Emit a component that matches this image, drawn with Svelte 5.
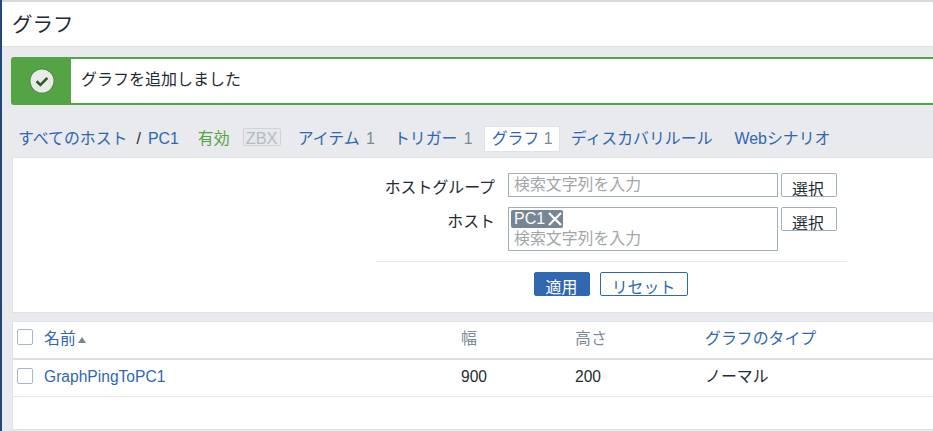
<script>
	const jp = "検索文字列を入力";
</script>

<div class="page">
	<aside class="rail"></aside>
	<main class="content">
		<header class="title"><h1>グラフ</h1></header>

		<div class="msg">
			<div class="msg-icon">
				<svg width="26" height="26" viewBox="0 0 26 26">
					<circle cx="13" cy="13" r="12.5" fill="#2f5f2b" opacity="0.35" />
					<circle cx="13" cy="13" r="11.5" fill="#e9ebe8" />
					<path d="M7.6 13.2l3.8 3.7 7-7" fill="none" stroke="#2c5c2a" stroke-width="2.6" />
				</svg>
			</div>
			<div class="msg-text">グラフを追加しました</div>
		</div>

		<nav class="tabs">
			<a class="link" href="#a">すべてのホスト</a>
			<span class="sep">/</span>
			<a class="link pc" href="#a">PC1</a>
			<span class="status">有効</span>
			<span class="zbx">ZBX</span>
			<span class="tab items"><a class="link" href="#a">アイテム</a> <span class="count">1</span></span>
			<span class="tab trig"><a class="link" href="#a">トリガー</a> <span class="count">1</span></span>
			<span class="tab active"><a class="link" href="#a">グラフ</a> <span class="count">1</span></span>
			<span class="tab after"><a class="link" href="#a">ディスカバリルール</a></span>
			<span class="tab web"><a class="link" href="#a">Webシナリオ</a></span>
		</nav>

		<section class="filter">
			<div class="filter-inner">
				<div class="row">
					<span class="lbl">ホストグループ</span>
					<div class="box"><span class="ph">{jp}</span></div>
					<button class="pick">選択</button>
				</div>
				<div class="row second">
					<span class="lbl">ホスト</span>
					<div class="box tall">
						<span class="chip">PC1<svg width="16" height="14" viewBox="0 0 16 14"><path d="M2 1l12 12M14 1l-12 12" stroke="#fff" stroke-width="2.2" /></svg></span>
						<span class="ph">{jp}</span>
					</div>
					<button class="pick">選択</button>
				</div>
				<div class="actions">
					<button class="apply">適用</button>
					<button class="reset">リセット</button>
				</div>
			</div>
		</section>

		<section class="table">
			<div class="tr head">
				<span class="cb"></span>
				<span class="c-name"><a class="link" href="#a">名前</a><i class="arrow"></i></span>
				<span class="c-w muted">幅</span>
				<span class="c-h muted">高さ</span>
				<span class="c-t"><a class="link" href="#a">グラフのタイプ</a></span>
			</div>
			<div class="tr body">
				<span class="cb"></span>
				<span class="c-name latin"><a class="link" href="#a">GraphPingToPC1</a></span>
				<span class="c-w latin">900</span>
				<span class="c-h latin">200</span>
				<span class="c-t">ノーマル</span>
			</div>
		</section>
	</main>
</div>

<style>
	:global(body) {
		margin: 0;
		background: #e8eaee;
		overflow: hidden;
	}
	.page {
		display: flex;
		width: 933px;
		height: 431px;
		overflow: hidden;
		font-family: "Liberation Sans", Arial, "Noto Sans CJK JP", sans-serif;
		font-size: 15.9px;
		color: #1f2c33;
		background: #e8eaee;
	}
	.rail {
		width: 2px;
		flex: none;
		background: #1f4a78;
	}
	.content {
		flex: 1;
		min-width: 0;
	}
	.title {
		height: 44px;
		margin-top: 2px;
		padding-left: 10px;
		display: flex;
		align-items: center;
		background: #fff;
		border-bottom: 1px solid #dde0e4;
		box-shadow: 0 -2px 0 #d6d8dc;
	}
	h1 {
		margin: -3px 0 0;
		font-size: 20.5px;
		font-weight: 400;
	}
	.msg {
		display: flex;
		height: 48px;
		box-sizing: border-box;
		margin: 10px 0 0 9px;
		border: 2px solid #54a445;
		border-right: 0;
		border-radius: 3px 0 0 3px;
		background: #fff;
	}
	.msg-icon {
		width: 58px;
		display: flex;
		align-items: center;
		justify-content: center;
		background: #54a445;
	}
	.msg-text {
		padding-left: 10px;
		line-height: 42px;
		font-size: 16px;
	}
	.tabs {
		display: flex;
		align-items: baseline;
		height: 26px;
		margin: 21px 0 0 16px;
		white-space: nowrap;
	}
	.link {
		color: #2f67b0;
		text-decoration: none;
	}
	.sep {
		margin-left: 9px;
		color: #1f2c33;
	}
	.pc {
		margin-left: 7px;
	}
	.status {
		margin-left: 19px;
		color: #54a445;
	}
	.zbx {
		margin-left: 13px;
		width: 38px;
		height: 18px;
		box-sizing: border-box;
		border: 1px solid #d0d4d8;
		border-radius: 2px;
		color: #b4bcc3;
		font-size: 16.4px;
		line-height: 19px;
		text-align: center;
		background: #e6e8ea;
	}
	.tab {
		padding: 0 5px;
		margin-left: 11px;
		height: 26px;
		line-height: 26px;
		box-sizing: border-box;
	}
	.tab.items {
		margin-left: 12px;
	}
	.tab.trig {
		margin-left: 9px;
	}
	.tab.web {
		margin-left: 12px;
	}
	.count {
		margin-left: 2px;
		color: #7c8a93;
	}
	.tab.active {
		background: #fff;
		border: 1px solid #dfe2e6;
		line-height: 24px;
		padding: 0 6px 0 7px;
		margin-left: 6px;
	}
	.tab.active .count {
		margin-left: 0;
	}
	.tab.after {
		margin-left: 6px;
	}
	.filter {
		height: 156px;
		box-sizing: border-box;
		margin: 5px 0 0 10px;
		background: #fff;
		border: 1px solid #dfe2e6;
		border-right: 0;
		padding-top: 15px;
	}
	.filter-inner {
		width: 471px;
		margin-left: 363px;
	}
	.row {
		display: flex;
		align-items: flex-start;
	}
	.row.second {
		margin-top: 10px;
	}
	.lbl {
		width: 119px;
		text-align: right;
		padding-top: 6px;
		line-height: 18px;
	}
	.box {
		width: 270px;
		height: 24px;
		box-sizing: border-box;
		margin-left: 13px;
		border: 1px solid #9fafbc;
		padding: 1px 0 0 5px;
		line-height: 20px;
	}
	.box.tall {
		height: 44px;
		padding: 0 0 0 2px;
		display: flex;
		flex-direction: column;
		align-items: flex-start;
	}
	.box.tall .ph {
		margin-left: 3px;
		line-height: 21px;
	}
	.ph {
		color: #a3a6a8;
	}
	.chip {
		display: flex;
		align-items: center;
		height: 18px;
		margin-top: 2px;
		padding: 0 0 0 3px;
		gap: 2px;
		background: #768693;
		color: #fff;
		border-radius: 2px;
		font-size: 16px;
	}
	.pick {
		width: 56px;
		height: 24px;
		margin-left: 3px;
		padding: 9px 2px 0 0;
		border: 1px solid #9fafbc;
		border-radius: 2px;
		background: #fff;
		color: #1f2c33;
		font: inherit;
		line-height: 12px;
		overflow: hidden;
	}
	.actions {
		display: flex;
		justify-content: center;
		gap: 10px;
		margin-top: 10px;
		padding: 10px 2px 0 0;
		border-top: 1px solid #e6e8eb;
	}
	.actions button {
		height: 24px;
		padding: 8px 0 0;
		font: inherit;
		line-height: 12px;
		border-radius: 2px;
		overflow: hidden;
		box-sizing: border-box;
	}
	.apply {
		width: 56px;
		background: #2f67b0;
		border: 1px solid #2f67b0;
		color: #fff;
	}
	.reset {
		width: 88px;
		background: #fff;
		border: 1px solid #2f67b0;
		color: #2f67b0;
	}
	.table {
		height: 109px;
		box-sizing: border-box;
		margin: 8px 0 0 10px;
		background: #fff;
		border-top: 1px solid #dfe2e6;
		border-left: 1px solid #dfe2e6;
		border-bottom: 1px solid #dfe2e6;
	}
	.tr {
		display: grid;
		grid-template-columns: 31px 417px 114px 130px 1fr;
		box-sizing: border-box;
		align-items: center;
		line-height: 20px;
	}
	.head {
		height: 38px;
		padding-bottom: 3px;
		border-bottom: 2px solid #dbdfe3;
	}
	.body {
		height: 37px;
		padding-bottom: 2px;
		border-bottom: 1px solid #e6e8eb;
	}
	.latin {
		font-size: 15.6px;
	}
	.cb {
		width: 16px;
		height: 16px;
		margin: -3px 0 0 4px;
		border: 1px solid #a8b6c2;
		border-radius: 2px;
		box-sizing: border-box;
		background: #fff;
	}
	.c-name {
		display: flex;
		align-items: center;
	}
	.arrow {
		margin: 3px 0 0 2px;
		border-left: 4px solid transparent;
		border-right: 4px solid transparent;
		border-bottom: 6px solid #768693;
	}
	.muted {
		color: #7c8a93;
	}
</style>
